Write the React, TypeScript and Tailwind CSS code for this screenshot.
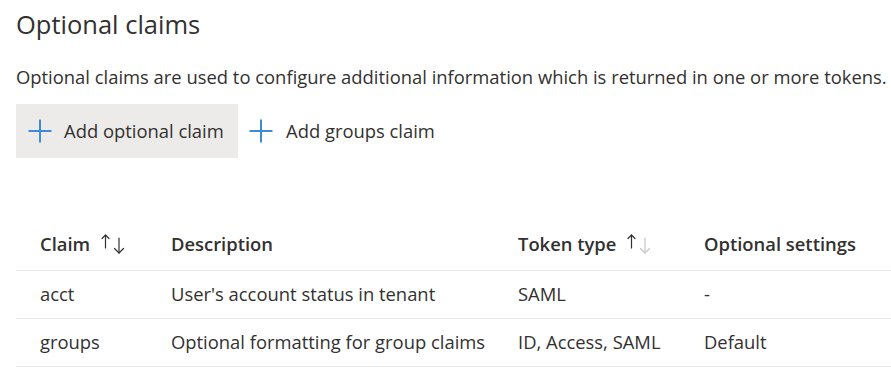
const rows = [
  { claim: 'acct', description: "User's account status in tenant", token: 'SAML', settings: '-' },
  { claim: 'groups', description: 'Optional formatting for group claims', token: 'ID, Access, SAML', settings: 'Default' },
]

function PlusIcon() {
  return (
    <svg width="24" height="24" viewBox="0 0 24 24" className="shrink-0">
      <path d="M12 0.5v23M0.5 12h23" stroke="#3d8bd6" strokeWidth="2" fill="none" />
    </svg>
  )
}

function SortIcon({ dimDown }: { dimDown?: boolean }) {
  return (
    <svg width="26" height="22" viewBox="0 0 26 22" className="ml-[11px] inline-block">
      <g fill="none" strokeWidth="1.2" strokeLinecap="round" strokeLinejoin="round">
        <g stroke="#323130">
          <path d="M4.5 2v13" />
          <path d="M1 5.5l3.5-3.5 3.5 3.5" />
        </g>
        <g stroke={dimDown ? '#c8c6c4' : '#323130'}>
          <path d="M18 5v15" />
          <path d="M13.5 15.5l4.5 4.5 4.5-4.5" />
        </g>
      </g>
    </svg>
  )
}

export default function App() {
  return (
    <div
      className="w-[891px] h-[380px] bg-white overflow-hidden text-[#323130]"
      style={{ fontFamily: '"Open Sans", "Noto Sans", sans-serif' }}
    >
      <div className="pl-4 pt-[6px]">
        <h1 className="text-[25.5px] leading-[36px] font-normal">Optional claims</h1>
        <p className="mt-[23px] text-[18.4px] leading-[24px] whitespace-nowrap">
          Optional claims are used to configure additional information which is returned in one or more tokens.
        </p>
        <div className="mt-[15px] flex items-center">
          <button className="flex items-center h-[54px] w-[222px] bg-[#edebe9] pl-[12px] text-[18.4px]">
            <PlusIcon />
            <span className="ml-[12px]">Add optional claim</span>
          </button>
          <button className="flex items-center h-[54px] pl-[11px] text-[18.4px]">
            <PlusIcon />
            <span className="ml-[13px]">Add groups claim</span>
          </button>
        </div>
      </div>

      <table className="mt-[64px] ml-4 w-[875px] border-collapse text-[18.4px]">
        <thead>
          <tr className="border-b border-[#edebe9] h-[48px]">
            <th className="w-[155px] pl-6 pb-[4px] text-left font-semibold">
              <span className="inline-flex items-center">
                Claim
                <SortIcon />
              </span>
            </th>
            <th className="w-[347px] pl-0 pb-[4px] text-left font-semibold">Description</th>
            <th className="w-[186px] pb-[4px] text-left font-semibold">
              <span className="inline-flex items-center">
                Token type
                <SortIcon dimDown />
              </span>
            </th>
            <th className="pb-[4px] text-left font-semibold">Optional settings</th>
          </tr>
        </thead>
        <tbody>
          {rows.map((r) => (
            <tr key={r.claim} className="border-b border-[#edebe9] h-[48px]">
              <td className="pl-6">{r.claim}</td>
              <td>{r.description}</td>
              <td>{r.token}</td>
              <td>{r.settings}</td>
            </tr>
          ))}
        </tbody>
      </table>
    </div>
  )
}
